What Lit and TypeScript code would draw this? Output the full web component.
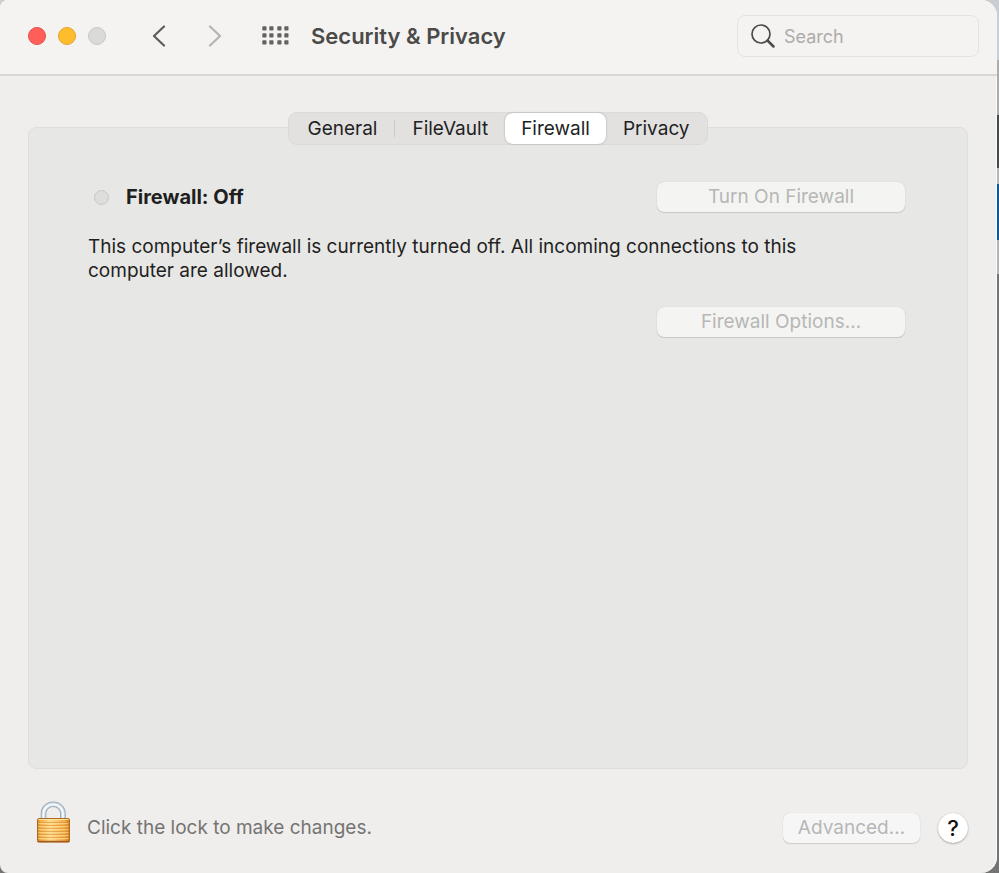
import { LitElement, html, css, svg } from "lit";
import { customElement, state } from "lit/decorators.js";
import { classMap } from "lit/directives/class-map.js";

const TABS = ["General", "FileVault", "Firewall", "Privacy"];
const GRID_ROWS = [0, 7, 14];
const GRID_COLS = [0, 7, 15, 22];

@customElement("app-root")
export class AppRoot extends LitElement {
  @state() private tab = "Firewall";

  static styles = css`
    :host {
      display: block;
      box-sizing: border-box;
      min-height: 100vh;
      padding-right: 2px;
      font-family: Inter, "Liberation Sans", sans-serif;
      font-size: 19px;
      line-height: 24px;
      color: #1f1f1f;
      background: linear-gradient(
        #c9ced3 0 60px, #aaacae 60px 115px, #484848 115px 168px,
        #b8b8b8 168px 184px, #0a5799 184px 240px, #b5b5b5 240px 274px,
        #747474 274px
      );
    }
    * { box-sizing: border-box; }
    button, input { font: inherit; color: inherit; margin: 0; }
    button { border: 0; padding: 0; background: none; white-space: nowrap; }
    svg { display: block; }
    p, h1, h2 { margin: 0; }

    .window {
      display: flex;
      flex-direction: column;
      min-height: 100vh;
      background: #efeeec;
      border-radius: 8px 16px 16px 8px;
      box-shadow: inset -1px 0 #fafafa;
    }
    .toolbar {
      display: flex;
      align-items: center;
      height: 76px;
      padding: 0 18px 3px 28px;
      background: #f4f3f1;
      border-bottom: 2px solid #d8d7d6;
      border-radius: 8px 16px 0 0;
    }
    .lights { display: flex; gap: 12px; }
    .light { width: 18px; height: 18px; border-radius: 50%; border: 1px solid #e2504a; background: #ff5f58; }
    .light.minimise { border-color: #e2a42c; background: #ffbd2e; }
    .light.zoom { border-color: #c8c7c6; background: #dadad8; }
    .nav { display: flex; gap: 42px; margin-left: 46px; }
    .all { margin-left: 40px; }
    .title { margin-left: 22px; font-size: 22px; line-height: 28px; font-weight: 600; color: #4b4a49; }
    .search {
      display: flex;
      align-items: center;
      gap: 8px;
      width: 242px;
      height: 42px;
      margin-left: auto;
      padding: 0 12px;
      border: 1px solid #e4e3e1;
      border-radius: 8px;
    }
    .search input { min-width: 0; flex: 1; border: 0; padding: 2px 0 0; outline: 0; background: none; font-size: 18px; }
    .search input::placeholder { color: #acabaa; opacity: 1; }

    .content { flex: 1; display: flex; flex-direction: column; padding: 36px 29px 0 28px; }
    .tabs {
      position: relative;
      display: flex;
      align-self: center;
      height: 33px;
      margin-bottom: -18px;
      border: 1px solid #dbdad9;
      border-radius: 9px;
      background: #e2e1e0;
    }
    .tab { padding: 0 17px; border-radius: 8px; }
    .tab:first-child { padding: 0 18px; }
    .tab.divided { background: linear-gradient(#c9c8c7, #c9c8c7) right center / 1px 17px no-repeat; }
    .tab.selected { padding: 0 16px; background: #fff; box-shadow: 0 0 2px #0000004d; }
    .panel {
      flex: 1;
      padding: 53px 62px 30px 59px;
      background: #e7e7e5;
      border: 1px solid #dededc;
      border-radius: 8px;
    }
    .status { display: flex; align-items: center; height: 32px; }
    .dot { width: 15px; height: 15px; margin: 0 17px 0 6px; border: 1px solid #c8c8c7; border-radius: 50%; background: #dededd; }
    .status h2 { flex: 1; font-size: 20px; font-weight: 700; }
    .push {
      width: 248px;
      height: 30px;
      border-radius: 7px;
      background: #f4f4f2;
      color: #b7b7b6;
      box-shadow: 0 0 1px #0000002e, 0 1px 1px #0000001f;
    }
    .about { max-width: 740px; margin: 22px 0 24px; }
    .options { display: flex; justify-content: flex-end; }

    .footer { display: flex; align-items: flex-end; padding: 32px 29px 30px 35px; }
    .lock { margin-right: 16px; }
    .hint { color: #757473; flex: 1; line-height: 30px; }
    .push.advanced { width: 137px; background: #f6f6f6; }
    .help {
      width: 30px;
      height: 30px;
      margin-left: 18px;
      border-radius: 50%;
      background: #fff;
      color: #111;
      font-size: 22px;
      font-weight: 500;
      box-shadow: 0 0 1px #00000040, 0 1px 2px #00000040;
    }
  `;

  private chevron(points: string, color: string) {
    return html`<svg width="14" height="22" viewBox="0 0 14 22" fill="none" stroke=${color}
      stroke-width="2.2" stroke-linecap="round" stroke-linejoin="round"><polyline points=${points} /></svg>`;
  }

  private lockIcon() {
    return html`<svg width="36" height="42" viewBox="0 0 36 42">
      <defs>
        <linearGradient id="brass" x1="0" x2="1">
          <stop offset="0" stop-color="#d98a25" /><stop offset=".1" stop-color="#f5b04a" />
          <stop offset=".4" stop-color="#ffdc90" /><stop offset=".85" stop-color="#f5ab45" />
          <stop offset="1" stop-color="#c87918" />
        </linearGradient>
      </defs>
      <path d="M8.500 19V12.500a9.700 9.200 0 0 1 19.400 0V19" fill="none" stroke="#96a4ae" stroke-width="5.600" />
      <path d="M8.500 19V12.500a9.700 9.200 0 0 1 19.400 0V19" fill="none" stroke="#c8d5de" stroke-width="4" />
      <path d="M8.500 19V12.500a9.700 9.200 0 0 1 19.400 0V19" fill="none" stroke="#f8fcff" stroke-width="1.800" />
      <rect x="2.500" y="17.500" width="32" height="23.500" rx="1.500" fill="url(#brass)" stroke="#b06a20" />
      <path d="M3.500 18.500H33.500" stroke="#ffe3a0" />
      ${[21, 24, 27, 30, 33, 36].map((y) => svg`
        <path d="M3.500 ${y + 0.5}H33.500" stroke="#d98d2c" stroke-opacity=".6" />
        <path d="M3.500 ${y + 1.5}H33.500" stroke="#ffe09a" stroke-opacity=".6" />`)}
      <path d="M2.500 40.500H34.500" stroke="#a35a19" stroke-width="1.500" />
    </svg>`;
  }

  render() {
    return html`
      <main class="window">
        <header class="toolbar">
          <div class="lights">
            <button class="light" aria-label="Close"></button>
            <button class="light minimise" aria-label="Minimise"></button>
            <button class="light zoom" aria-label="Zoom" disabled></button>
          </div>
          <nav class="nav">
            <button aria-label="Back">${this.chevron("12,1.5 2,11 12,20.500", "#5c5b5a")}</button>
            <button aria-label="Forward" disabled>${this.chevron("2,1.5 12,11 2,20.500", "#b4b3b2")}</button>
          </nav>
          <button class="all" aria-label="Show all">
            <svg width="27" height="19" viewBox="0 0 27 19" fill="#636261">
              ${GRID_ROWS.map((y) => GRID_COLS.map((x) => svg`<rect x=${x + 0.3} y=${y + 0.3} width="4.200" height="4.200" rx=".8" />`))}
            </svg>
          </button>
          <h1 class="title">Security &amp; Privacy</h1>
          <label class="search">
            <svg width="26" height="26" viewBox="0 0 26 26" fill="none" stroke="#4c4b4a" stroke-linecap="round">
              <circle cx="11" cy="11" r="9" stroke-width="1.700" />
              <path d="M17.500 17.500L23.500 23.500" stroke-width="2.500" />
            </svg>
            <input type="text" placeholder="Search" aria-label="Search" />
          </label>
        </header>
        <section class="content">
          <div class="tabs" role="tablist">
            ${TABS.map((name, i) => html`<button
              role="tab"
              aria-selected=${this.tab === name ? "true" : "false"}
              class=${classMap({
                tab: true,
                selected: this.tab === name,
                divided: i < TABS.length - 1 && this.tab !== name && this.tab !== TABS[i + 1],
              })}
              @click=${() => (this.tab = name)}
            >${name}</button>`)}
          </div>
          <div class="panel" role="tabpanel">
            <div class="status">
              <span class="dot"></span>
              <h2>Firewall: Off</h2>
              <button class="push" disabled>Turn On Firewall</button>
            </div>
            <p class="about">This computer’s firewall is currently turned off. All incoming connections to this computer are allowed.</p>
            <div class="options"><button class="push" disabled>Firewall Options…</button></div>
          </div>
        </section>
        <footer class="footer">
          <button class="lock" aria-label="Unlock">${this.lockIcon()}</button>
          <span class="hint">Click the lock to make changes.</span>
          <button class="push advanced" disabled>Advanced…</button>
          <button class="help" aria-label="Help">?</button>
        </footer>
      </main>
    `;
  }
}
